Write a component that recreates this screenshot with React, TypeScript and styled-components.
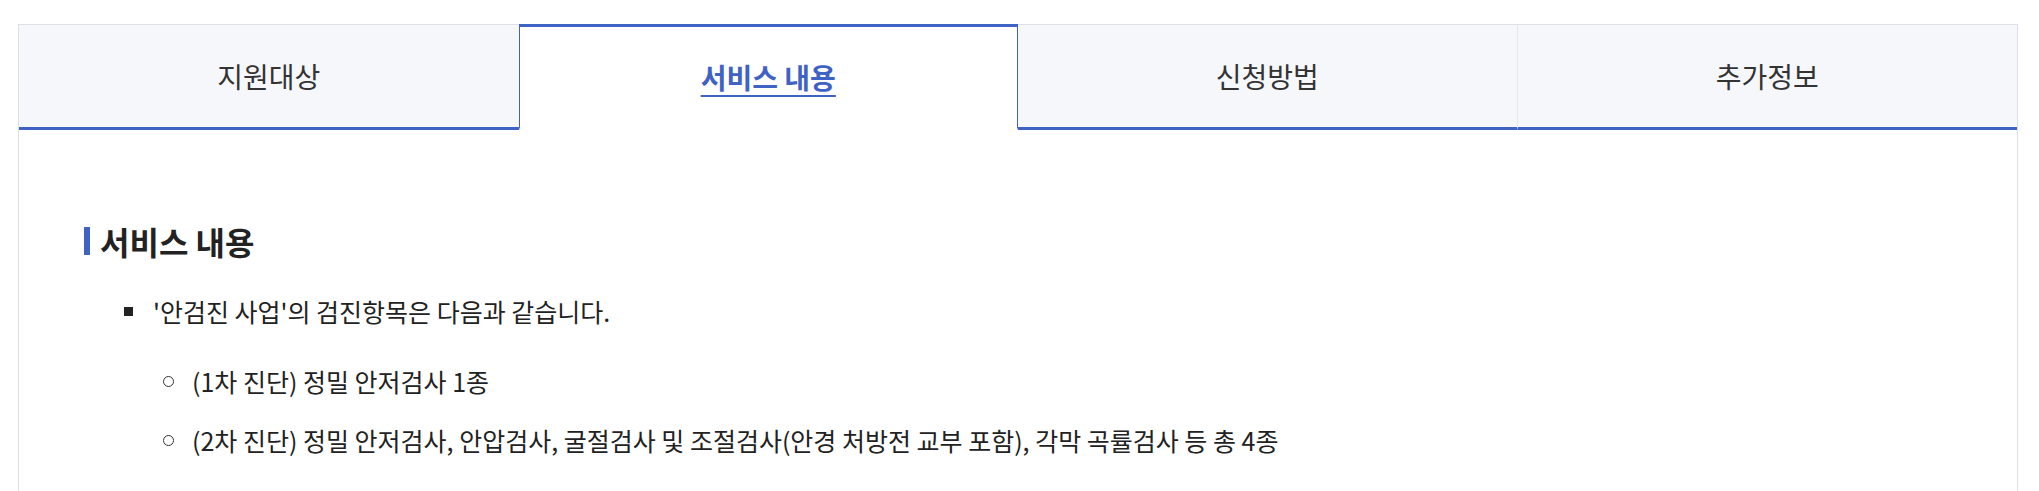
import { useState } from 'react';
import styled, { createGlobalStyle } from 'styled-components';

const GlobalStyle = createGlobalStyle`
  body {
    margin: 0;
    background: #fff;
    font-family: "Noto Sans CJK KR", "Noto Sans", sans-serif;
    color: #222;
  }
  * { box-sizing: border-box; }
`;

const BLUE = '#3f62c5';

const tabs = ['지원대상', '서비스 내용', '신청방법', '추가정보'];

const App = () => {
  const [active, setActive] = useState<number>(1);

  return (
    <>
      <GlobalStyle />
      <Frame>
        <TabList>
          {tabs.map((label, i) => (
            <Tab key={label} $active={i === active} $last={i === tabs.length - 1} onClick={() => setActive(i)}>
              <TabLabel $active={i === active}>{label}</TabLabel>
            </Tab>
          ))}
        </TabList>
        <Panel>
          <SectionTitle>서비스 내용</SectionTitle>
          <BulletList>
            <BulletItem>
              '안검진 사업'의 검진항목은 다음과 같습니다.
              <SubList>
                <SubItem>(1차 진단) 정밀 안저검사 1종</SubItem>
                <SubItem>(2차 진단) 정밀 안저검사, 안압검사, 굴절검사 및 조절검사(안경 처방전 교부 포함), 각막 곡률검사 등 총 4종</SubItem>
              </SubList>
            </BulletItem>
          </BulletList>
        </Panel>
      </Frame>
    </>
  );
};

export default App;

const Frame = styled.div`
  width: 2000px;
  margin: 24px 0 0 18px;
`;

const TabList = styled.div`
  display: grid;
  grid-template-columns: repeat(4, 1fr);
  border-left: 1px solid #dcdfe5;
  border-right: 1px solid #dcdfe5;
`;

const Tab = styled.button<{ $active: boolean; $last: boolean }>`
  height: 106px;
  display: flex;
  align-items: center;
  justify-content: center;
  padding: 0;
  font-family: inherit;
  cursor: pointer;
  background: ${({ $active }) => ($active ? '#fff' : '#f5f7fb')};
  border: none;
  border-top: ${({ $active }) => ($active ? `3px solid ${BLUE}` : '1px solid #dcdfe5')};
  border-bottom: ${({ $active }) => ($active ? '3px solid transparent' : `3px solid ${BLUE}`)};
  border-left: ${({ $active }) => ($active ? `1px solid ${BLUE}` : 'none')};
  border-right: ${({ $active, $last }) =>
    $active ? `1px solid ${BLUE}` : $last ? 'none' : '1px solid #e4e7ee'};
  &:first-child { border-right: none; }
`;

const TabLabel = styled.span<{ $active: boolean }>`
  font-size: 28px;
  font-weight: ${({ $active }) => ($active ? 700 : 400)};
  color: ${({ $active }) => ($active ? BLUE : '#333')};
  text-decoration: ${({ $active }) => ($active ? 'underline' : 'none')};
  text-underline-offset: 6px;
  text-decoration-thickness: 2px;
`;

const Panel = styled.div`
  border-left: 1px solid #dcdfe5;
  border-right: 1px solid #dcdfe5;
  padding: 91px 65px 80px;
`;

const SectionTitle = styled.h3`
  display: flex;
  align-items: center;
  gap: 10px;
  margin: 0;
  font-size: 32px;
  line-height: 40px;
  font-weight: 700;
  color: #222;
  &::before {
    content: '';
    width: 6px;
    height: 28px;
    background: ${BLUE};
  }
`;

const BulletList = styled.ul`
  list-style: none;
  margin: 32px 0 0;
  padding: 0 0 0 40px;
`;

const BulletItem = styled.li`
  position: relative;
  padding-left: 29px;
  font-size: 25px;
  line-height: 36px;
  color: #222;
  &::before {
    content: '';
    position: absolute;
    left: 0;
    top: 14px;
    width: 9px;
    height: 9px;
    background: #222;
  }
`;

const SubList = styled.ul`
  list-style: none;
  margin: 34px 0 0;
  padding: 0 0 0 10px;
  display: flex;
  flex-direction: column;
  gap: 23px;
`;

const SubItem = styled.li`
  position: relative;
  padding-left: 29px;
  &::before {
    content: '';
    position: absolute;
    left: 0;
    top: 13px;
    width: 9px;
    height: 9px;
    border: 1px solid #333;
    border-radius: 50%;
  }
`;
